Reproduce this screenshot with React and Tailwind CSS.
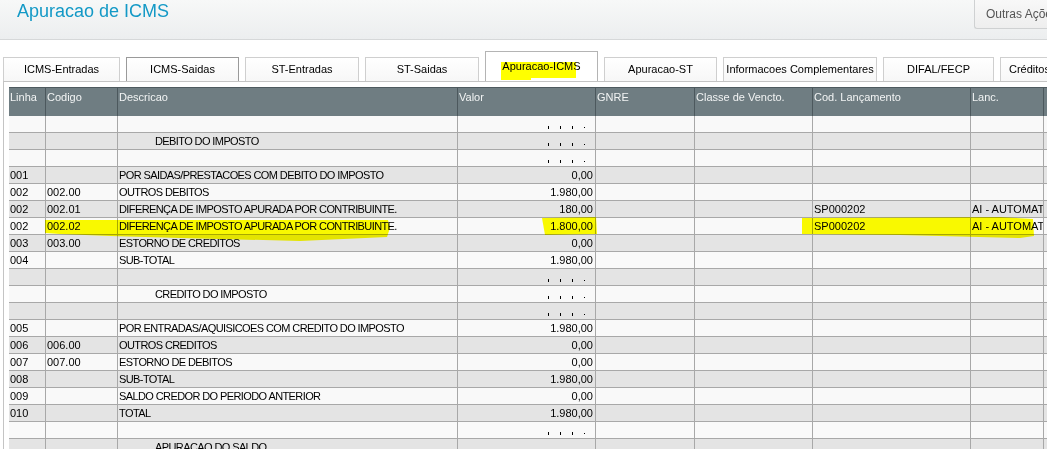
import React from 'react';

const cols = [
  { key: 'l', label: 'Linha', w: 'w-[37px]' },
  { key: 'c', label: 'Codigo', w: 'w-[72px]' },
  { key: 'd', label: 'Descricao', w: 'w-[340px]' },
  { key: 'v', label: 'Valor', w: 'w-[138px]' },
  { key: 'g', label: 'GNRE', w: 'w-[99px]' },
  { key: 'cv', label: 'Classe de Vencto.', w: 'w-[118px]' },
  { key: 'cl', label: 'Cod. Lançamento', w: 'w-[158px]' },
  { key: 'la', label: 'Lanc.', w: 'w-[73px]' },
  { key: 'x', label: '', w: 'w-[80px]' },
];

const DIF = 'DIFERENÇA DE IMPOSTO APURADA POR CONTRIBUINTE.';

const rows = [
  { dots: true },
  { d: 'DEBITO DO IMPOSTO', indent: true, dots: true },
  { dots: true },
  { l: '001', d: 'POR SAIDAS/PRESTACOES COM DEBITO DO IMPOSTO', v: '0,00' },
  { l: '002', c: '002.00', d: 'OUTROS DEBITOS', v: '1.980,00' },
  { l: '002', c: '002.01', d: DIF, v: '180,00', cl: 'SP000202', la: 'AI - AUTOMAT' },
  { l: '002', c: '002.02', d: DIF, v: '1.800,00', cl: 'SP000202', la: 'AI - AUTOMAT' },
  { l: '003', c: '003.00', d: 'ESTORNO DE CREDITOS', v: '0,00' },
  { l: '004', d: 'SUB-TOTAL', v: '1.980,00' },
  { dots: true },
  { d: 'CREDITO DO IMPOSTO', indent: true, dots: true },
  { dots: true },
  { l: '005', d: 'POR ENTRADAS/AQUISICOES COM CREDITO DO IMPOSTO', v: '1.980,00' },
  { l: '006', c: '006.00', d: 'OUTROS CREDITOS', v: '0,00' },
  { l: '007', c: '007.00', d: 'ESTORNO DE DEBITOS', v: '0,00' },
  { l: '008', d: 'SUB-TOTAL', v: '1.980,00' },
  { l: '009', d: 'SALDO CREDOR DO PERIODO ANTERIOR', v: '0,00' },
  { l: '010', d: 'TOTAL', v: '1.980,00' },
  { dots: true },
  { d: 'APURACAO DO SALDO', indent: true, dots: true },
];

const tabs = [
  { label: 'ICMS-Entradas', w: 'w-[117px]' },
  { label: 'ICMS-Saidas', w: 'w-[113px]', hover: true },
  { label: 'ST-Entradas', w: 'w-[114px]' },
  { label: 'ST-Saidas', w: 'w-[114px]' },
  { label: 'Apuracao-ICMS', w: 'w-[113px]', active: true },
  { label: 'Apuracao-ST', w: 'w-[113px]' },
  { label: 'Informacoes Complementares', w: 'w-[154px]' },
  { label: 'DIFAL/FECP', w: 'w-[111px]' },
  { label: 'Créditos', w: 'w-[80px]', left: true },
];

// the blank "  ,  ,  , ." mask the grid shows in empty value cells
const Dots = () => (
  <div className="flex h-full items-end justify-end gap-[11px] pr-[8px] pb-[3px]">
    <span className="block h-[3px] w-px bg-black" />
    <span className="block h-[3px] w-px bg-black" />
    <span className="block h-[3px] w-px bg-black" />
    <span className="mb-[1px] block h-px w-px bg-black" />
  </div>
);

const Tab = ({ tab }) => {
  if (tab.active) {
    return (
      <div className={`${tab.w} shrink-0 h-[30px] border border-b-0 border-[#b4b4b4] bg-white flex items-center justify-center text-[11px] text-black`}>
        {tab.label}
      </div>
    );
  }
  return (
    <div
      className={`${tab.w} shrink-0 h-[24px] border border-b-0 ${tab.hover ? 'border-[#9a9a9a]' : 'border-[#cfcfcf]'} bg-gradient-to-b from-white to-[#f7f7f7] flex items-center ${tab.left ? 'justify-start pl-[8px]' : 'justify-center'} text-[11px] text-black whitespace-nowrap overflow-hidden`}
    >
      {tab.label}
    </div>
  );
};

const App = () => {
  return (
    <div className="relative w-[1047px] h-[449px] overflow-hidden bg-white font-['Liberation_Sans',Arial,sans-serif]">
      {/* Header */}
      <div className="h-[40px] flex items-start border-b border-[#d6d8d9] bg-gradient-to-b from-[#f7f8f8] to-[#eceeef]">
        <h1 className="pl-[17px] text-[18px] leading-[22px] text-[#1399c6]">Apuracao de ICMS</h1>
        <button className="ml-auto mt-[-1px] h-[30px] w-[73px] shrink-0 rounded-bl-[3px] border border-r-0 border-[#cfd1d2] bg-gradient-to-b from-[#f8f8f8] to-[#eeeeee] pl-[11px] text-left text-[12px] text-[#555] whitespace-nowrap overflow-hidden">
          Outras Ações
        </button>
      </div>

      {/* Tabs */}
      <div className="mt-[11px] flex items-end gap-[6px] pl-[3px]">
        {tabs.map((t) => (
          <Tab key={t.label} tab={t} />
        ))}
      </div>

      {/* Panel */}
      <div className="ml-[3px] border-t border-l border-[#c4c4c4] pt-[5px] pl-[5px]">
        <div className="w-max text-[11px] text-black">
          <div className="flex h-[29px] border-t border-[#4e5a5f] bg-[#6f7d82]">
            {cols.map((c) => (
              <div key={c.key} className={`${c.w} shrink-0 border-r border-[#4c585d] pl-[1px] pt-[2px] text-[#f2f4f4] leading-[14px]`}>
                {c.label}
              </div>
            ))}
          </div>
          {rows.map((r, i) => (
            <div key={i} className={`flex h-[17px] border-b border-[#a8a8a8] ${i % 2 === 0 ? 'bg-[#f9f9f9]' : 'bg-[#e4e4e4]'}`}>
              <div className="w-[37px] shrink-0 border-r border-[#a8a8a8] pl-[1px] leading-[16px]">{r.l}</div>
              <div className="w-[72px] shrink-0 border-r border-[#a8a8a8] pl-[1px] leading-[16px]">{r.c}</div>
              <div className={`w-[340px] shrink-0 border-r border-[#a8a8a8] leading-[16px] tracking-[-0.6px] whitespace-nowrap ${r.indent ? 'pl-[37px]' : 'pl-[1px]'}`}>
                {r.d}
              </div>
              <div className="w-[138px] shrink-0 border-r border-[#a8a8a8] pr-[2px] text-right leading-[16px]">
                {r.dots ? <Dots /> : r.v}
              </div>
              <div className="w-[99px] shrink-0 border-r border-[#a8a8a8]" />
              <div className="w-[118px] shrink-0 border-r border-[#a8a8a8]" />
              <div className="w-[158px] shrink-0 border-r border-[#a8a8a8] pl-[1px] leading-[16px]">{r.cl}</div>
              <div className="w-[73px] shrink-0 border-r border-[#a8a8a8] pl-[1px] leading-[16px] whitespace-nowrap overflow-hidden">{r.la}</div>
              <div className="w-[80px] shrink-0" />
            </div>
          ))}
        </div>
      </div>

      {/* highlighter marks drawn over the screenshot */}
      <svg className="pointer-events-none absolute inset-0 mix-blend-multiply" width="1047" height="449" viewBox="0 0 1047 449">
        <polygon points="501,62 576,62 576,78 531,78 531,80 501,80" fill="#ffff00" />
        <polygon points="45,220 388,220 390,228 387,237 300,241 180,238 110,236 60,234 45,233" fill="#ffff00" />
        <polygon points="542,218 596,217 597,234 545,235" fill="#ffff00" />
        <polygon points="802,218 1000,217 1033,219 1034,236 1020,238 900,235 802,234" fill="#ffff00" />
      </svg>
    </div>
  );
};

export default App;
